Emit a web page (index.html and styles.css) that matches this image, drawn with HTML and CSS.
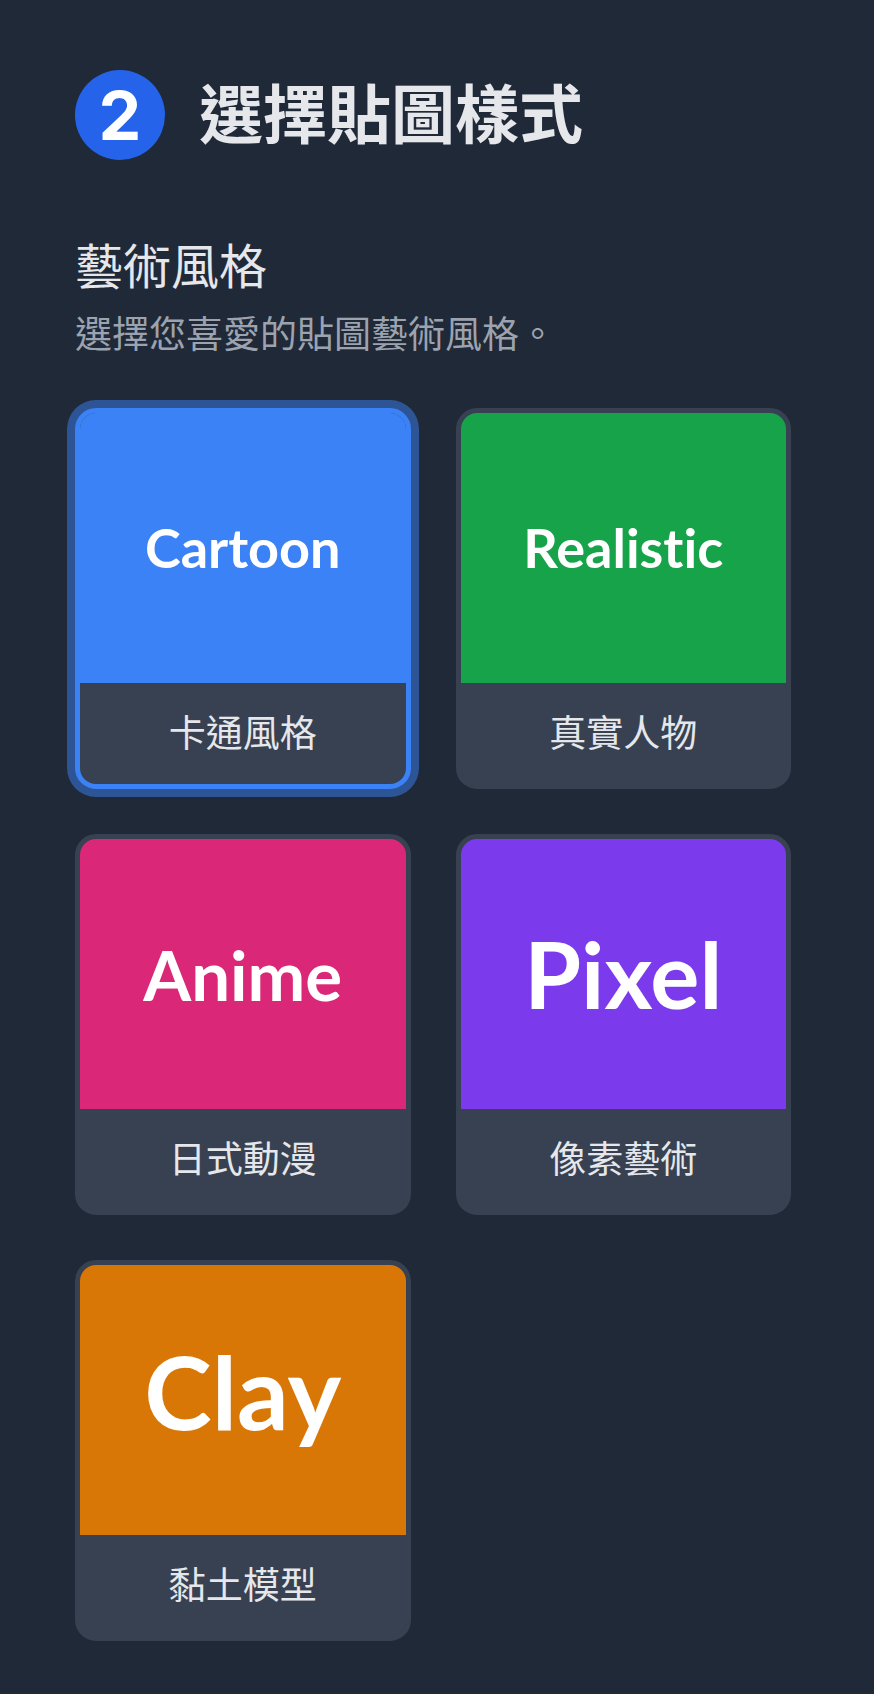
FILE: index.html
```
<!DOCTYPE html>
<html lang="zh-Hant">
<head>
<meta charset="utf-8">
<meta name="viewport" content="width=device-width, initial-scale=1">
<title>選擇貼圖樣式</title>
<link rel="stylesheet" href="styles.css">
</head>
<body>
<main class="step">
  <header class="step-header">
    <span class="step-number">2</span>
    <h2 class="step-title">選擇貼圖樣式</h2>
  </header>
  <h3 class="group-title" id="style-title">藝術風格</h3>
  <p class="group-hint">選擇您喜愛的貼圖藝術風格。</p>
  <div class="style-grid" role="radiogroup" aria-labelledby="style-title">
    <label class="card">
      <input class="card-input" type="radio" name="style" value="cartoon" checked>
      <span class="card-image cartoon">Cartoon</span>
      <span class="card-label">卡通風格</span>
    </label>
    <label class="card">
      <input class="card-input" type="radio" name="style" value="realistic">
      <span class="card-image realistic">Realistic</span>
      <span class="card-label">真實人物</span>
    </label>
    <label class="card">
      <input class="card-input" type="radio" name="style" value="anime">
      <span class="card-image anime">Anime</span>
      <span class="card-label">日式動漫</span>
    </label>
    <label class="card">
      <input class="card-input" type="radio" name="style" value="pixel">
      <span class="card-image pixel">Pixel</span>
      <span class="card-label">像素藝術</span>
    </label>
    <label class="card">
      <input class="card-input" type="radio" name="style" value="clay">
      <span class="card-image clay">Clay</span>
      <span class="card-label">黏土模型</span>
    </label>
  </div>
</main>
</body>
</html>
```
FILE: styles.css
```
* {
  box-sizing: border-box;
}

body {
  margin: 0;
  background: #1f2937;
  color: #e5e7eb;
  font-family: Inter, "Noto Sans CJK TC", sans-serif;
}

.step {
  padding: 70px 83px 52px 75px;
}

.step-header {
  display: flex;
  align-items: center;
  gap: 34px;
  margin-bottom: 72px;
}

.step-number {
  display: flex;
  align-items: center;
  justify-content: center;
  flex: none;
  width: 90px;
  height: 90px;
  border-radius: 50%;
  background: #2563eb;
  color: #fff;
  font-size: 68px;
  font-weight: 700;
  line-height: 1;
}

.step-title {
  margin: 0;
  font-size: 64px;
  font-weight: 700;
  line-height: 84px;
}

.group-title {
  margin: 0;
  font-size: 48px;
  font-weight: 400;
  line-height: 70px;
}

.group-hint {
  margin: 0 0 40px;
  color: #9ca3af;
  font-size: 37px;
  line-height: 66px;
}

.style-grid {
  display: grid;
  grid-template-columns: 1fr 1fr;
  gap: 45px;
}

.card {
  position: relative;
  display: flex;
  flex-direction: column;
  overflow: hidden;
  border: 5px solid #374151;
  border-radius: 21px;
  background: #374151;
  cursor: pointer;
}

.card:has(:checked) {
  border-color: #3b82f6;
  box-shadow: 0 0 0 8px rgba(59, 130, 246, 0.5);
}

.card-input {
  position: absolute;
  inset: 0;
  margin: 0;
  opacity: 0;
  cursor: pointer;
}

.card-image {
  display: flex;
  align-items: center;
  justify-content: center;
  height: 270px;
  color: #fff;
  font-family: Lato, sans-serif;
  font-weight: 700;
  font-variant-ligatures: none;
  line-height: 1;
}

.cartoon {
  background: #3b82f6;
  font-size: 54px;
}

.realistic {
  background: #16a34a;
  font-size: 54px;
}

.anime {
  background: #db2777;
  font-size: 69px;
}

.pixel {
  background: #7c3aed;
  font-size: 92px;
}

.clay {
  padding-bottom: 18px;
  background: #d97706;
  font-size: 102px;
}

.card-label {
  padding: 21px;
  font-size: 37px;
  line-height: 59px;
  text-align: center;
}
```
